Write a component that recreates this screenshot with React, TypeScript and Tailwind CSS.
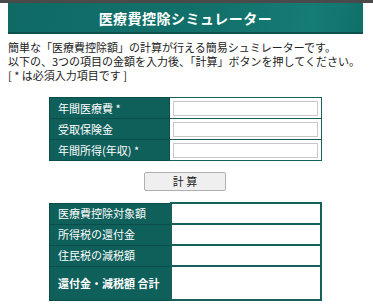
import React, { useState } from 'react';

const inputRows = [
  { label: '年間医療費 *' },
  { label: '受取保険金' },
  { label: '年間所得(年収) *' },
];

const resultRows = [
  { label: '医療費控除対象額', tall: false },
  { label: '所得税の還付金', tall: false },
  { label: '住民税の減税額', tall: false },
  { label: '還付金・減税額 合計', tall: true },
];

const font = { fontFamily: '"Noto Sans CJK JP", "Liberation Sans", sans-serif' };

const App: React.FC = () => {
  const [values, setValues] = useState(['', '', '']);

  return (
    <div className="w-[373px] h-[305px] bg-white overflow-hidden text-[#222]" style={font}>
      <div className="h-[3px] bg-[#4a4a4a]" />

      <div className="mx-[8px] w-[355px] h-[31px] flex items-center justify-center border-b-2 border-[#0a524e] bg-[linear-gradient(100deg,#0f6a64_0%,#12716b_60%,#167c76_85%,#10706a_100%)]">
        <h1 className="text-[14px] font-bold text-white leading-none tracking-[0.5px]">医療費控除シミュレーター</h1>
      </div>

      <div className="pl-[8px] pt-[6px] text-[11px] text-[#222]">
        <p className="h-[14px] leading-[14px]">簡単な「医療費控除額」の計算が行える簡易シュミレーターです。</p>
        <p className="h-[14px] leading-[14px]">以下の、3つの項目の金額を入力後、「計算」ボタンを押してください。</p>
        <p className="h-[14px] leading-[14px]">[ * は必須入力項目です ]</p>
      </div>

      <table className="ml-[49px] mt-[15px] w-[273px] border-collapse text-[11px]">
        <tbody>
          {inputRows.map((row, i) => (
            <tr key={row.label} className="h-[21px]">
              <td className="w-[120px] bg-[#0f5f5b] text-white pl-[8px] border border-[#0b4d49] leading-none">{row.label}</td>
              <td className="border border-[#17615c] bg-white px-[3px] py-0">
                <input
                  value={values[i]}
                  onChange={e => setValues(values.map((v, j) => (j === i ? e.target.value : v)))}
                  className="block w-full h-[15px] border border-[#c8c8c8] bg-white outline-none text-[11px] px-[2px]"
                />
              </td>
            </tr>
          ))}
        </tbody>
      </table>

      <div className="flex justify-center mt-[11px] pr-[3px]">
        <button className="w-[82px] h-[19px] bg-[#efefef] border border-[#b0b0b0] rounded-[2px] text-[11px] leading-none text-[#222]">
          計 算
        </button>
      </div>

      <table className="ml-[49px] mt-[11px] w-[273px] border-collapse text-[11px]">
        <tbody>
          {resultRows.map(row => (
            <tr key={row.label} className={row.tall ? 'h-[34px]' : 'h-[21px]'}>
              <td className={`w-[121px] bg-[#0f5f5b] text-white pl-[8px] border border-[#0b4d49] leading-none ${row.tall ? 'font-bold' : ''}`}>
                {row.label}
              </td>
              <td className="border-2 border-[#17615c] bg-white" />
            </tr>
          ))}
        </tbody>
      </table>
    </div>
  );
};

export default App;
